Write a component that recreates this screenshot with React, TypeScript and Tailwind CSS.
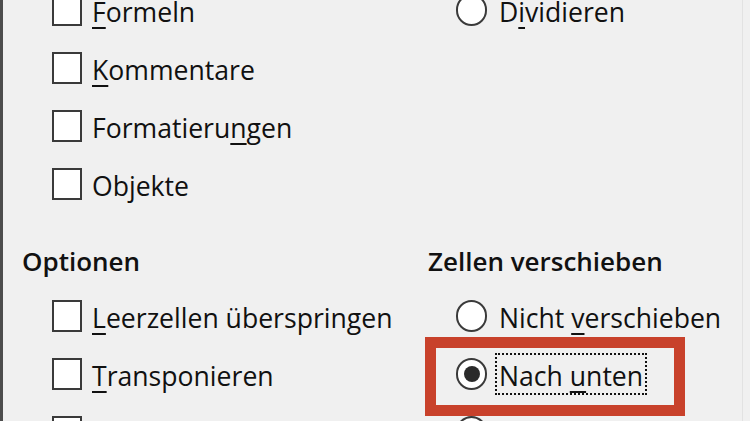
import React from "react";

const font = { fontFamily: '"Open Sans", "Noto Sans", sans-serif' };

// label with one underlined mnemonic letter
const Label = ({ text, hot }: { text: string; hot: number }) => (
  <span className="mt-[6px] text-[26.6px] leading-[0.8] text-[#111] whitespace-nowrap">
    {hot < 0 ? (
      text
    ) : (
      <>
        {text.slice(0, hot)}
        <span className="underline decoration-2 underline-offset-[5px]">{text[hot]}</span>
        {text.slice(hot + 1)}
      </>
    )}
  </span>
);

const CheckRow = ({ text, hot }: { text?: string; hot?: number }) => (
  <div className="h-[58px] flex items-center gap-[10px] pl-[30px]">
    <div className="w-[30px] h-[32px] border-2 border-[#3a3a3a] bg-white shrink-0" />
    {text && <Label text={text} hot={hot ?? -1} />}
  </div>
);

const RadioRow = ({
  text,
  hot = -1,
  checked = false,
  focused = false,
  marked = false,
}: {
  text?: string;
  hot?: number;
  checked?: boolean;
  focused?: boolean;
  marked?: boolean;
}) => (
  <div className="relative h-[58px] flex items-center gap-[8px] pl-[28px]">
    <div className="w-[31px] h-[32px] rounded-full border-2 border-[#3a3a3a] bg-white shrink-0 flex items-center justify-center">
      {checked && <div className="w-[16px] h-[16px] rounded-full bg-[#2a2a2a]" />}
    </div>
    {text && (
      <div
        className={
          focused
            ? "flex border-2 border-dotted border-[#111] px-[2px] h-[42px] items-center"
            : "flex px-[4px] items-center"
        }
      >
        <Label text={text} hot={hot} />
      </div>
    )}
    {marked && (
      <div className="absolute left-[-3px] top-[-8px] w-[260px] h-[79px] border-[11px] border-[#c8412b]" />
    )}
  </div>
);

const Header = ({ text }: { text: string }) => (
  <div className="h-[74px] flex items-end pb-[13px]">
    <span className="text-[26px] leading-none font-semibold text-[#111] whitespace-nowrap">{text}</span>
  </div>
);

export default function App() {
  return (
    <div
      className="relative w-[750px] h-[421px] overflow-hidden bg-[#f0f0f0] border-l-[3px] border-[#4d4d4d]"
      style={font}
    >
      <div className="mt-[-19px] pl-[19px] grid grid-cols-[406px_1fr]">
        <div className="flex flex-col">
          <CheckRow text="Formeln" hot={0} />
          <CheckRow text="Kommentare" hot={0} />
          <CheckRow text="Formatierungen" hot={10} />
          <CheckRow text="Objekte" hot={-1} />
          <Header text="Optionen" />
          <CheckRow text="Leerzellen überspringen" hot={0} />
          <CheckRow text="Transponieren" hot={0} />
          <CheckRow />
        </div>
        <div className="flex flex-col">
          <RadioRow text="Dividieren" hot={1} />
          <div className="h-[174px]" />
          <Header text="Zellen verschieben" />
          <RadioRow text="Nicht verschieben" hot={6} />
          <RadioRow text="Nach unten" hot={5} checked focused marked />
          <RadioRow />
        </div>
      </div>
      <div className="absolute right-[7px] top-0 h-full w-px bg-[#e2e2e2]" />
    </div>
  );
}
